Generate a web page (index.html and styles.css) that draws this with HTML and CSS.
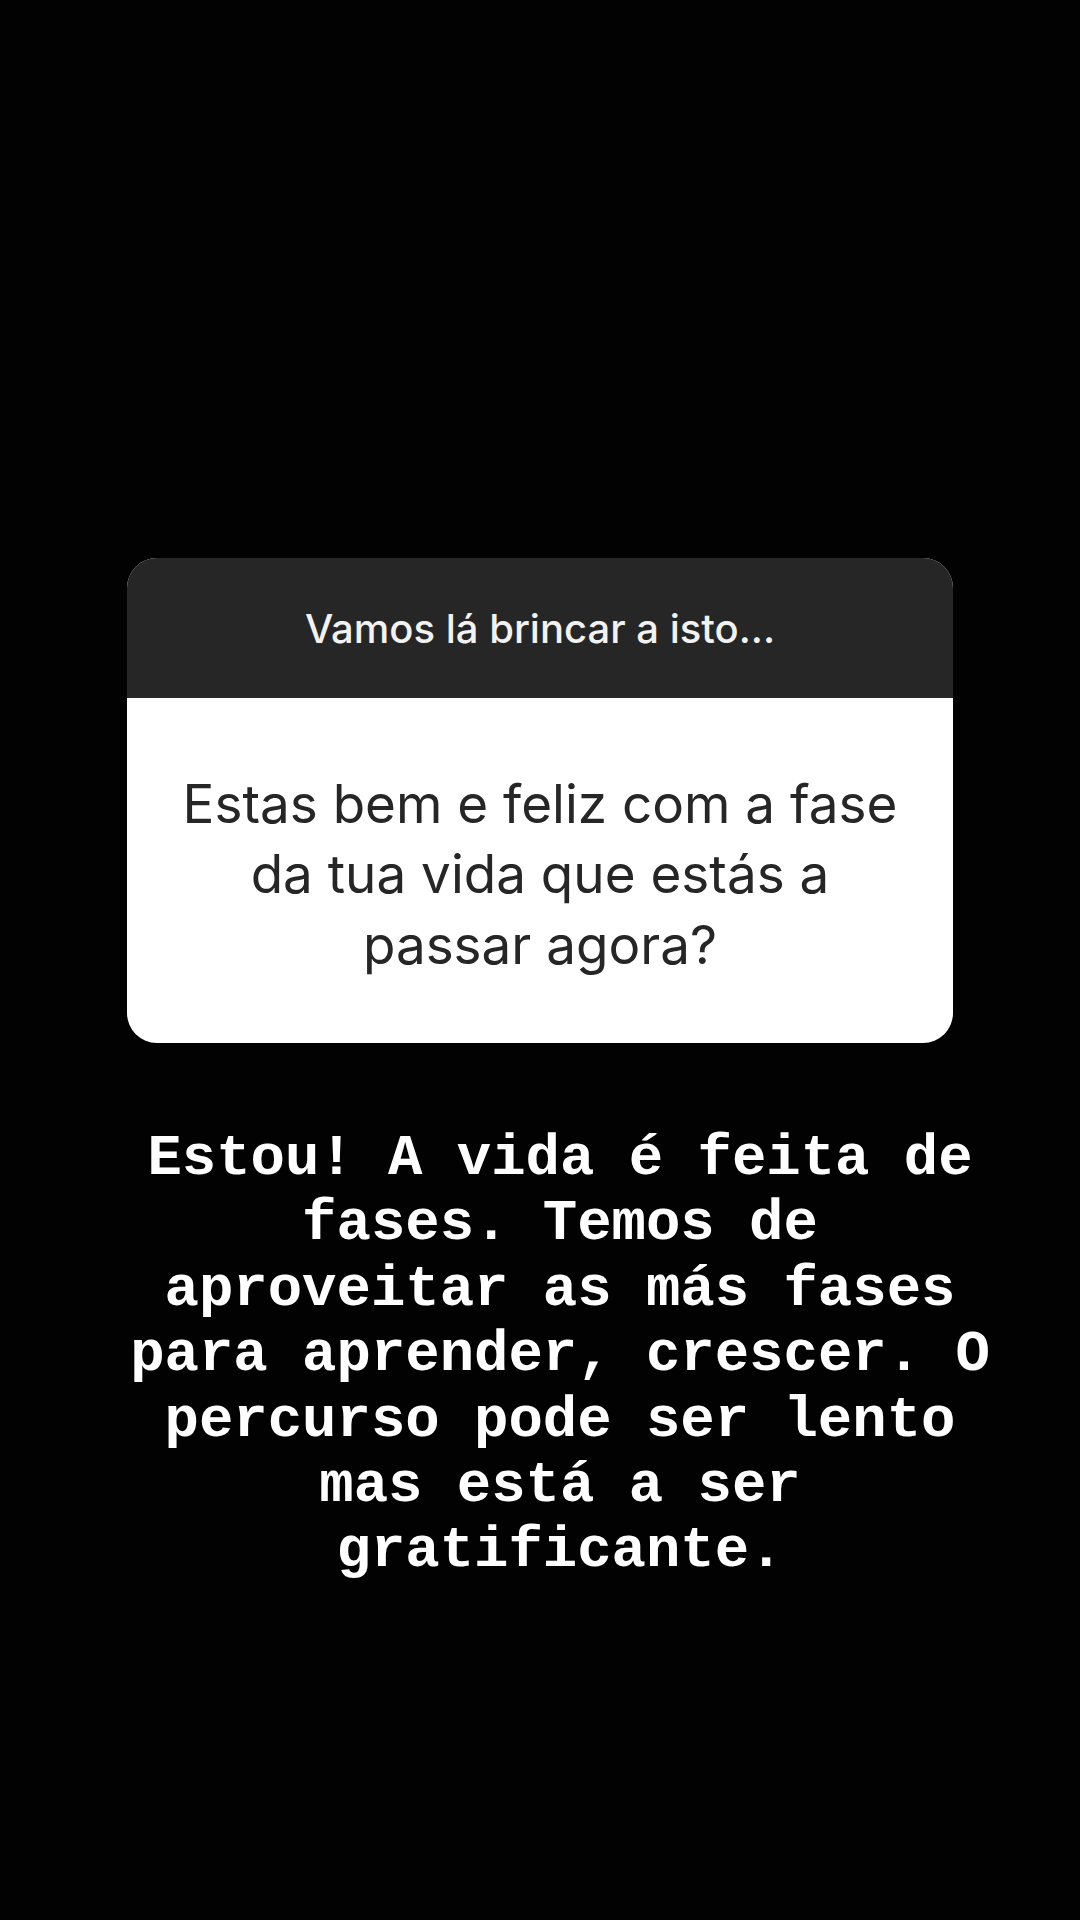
FILE: index.html
```html
<!DOCTYPE html>
<html lang="pt">
<head>
<meta charset="utf-8">
<link rel="stylesheet" href="styles.css">
</head>
<body>
<main class="story">
  <section class="question-card">
    <header class="card-header">Vamos lá brincar a isto...</header>
    <div class="card-body">
      <p class="question">Estas bem e feliz com a fase<br>da tua vida que estás a<br>passar agora?</p>
    </div>
  </section>
  <p class="answer">Estou! A vida é feita de<br>fases. Temos de<br>aproveitar as más fases<br>para aprender, crescer. O<br>percurso pode ser lento<br>mas está a ser<br>gratificante.</p>
</main>
</body>
</html>
```

FILE: styles.css
```css
html, body {
  margin: 0;
  padding: 0;
  background: #020202;
}
.story {
  width: 1080px;
  height: 1920px;
  display: flex;
  flex-direction: column;
  align-items: center;
  padding-top: 558px;
  box-sizing: border-box;
}
.question-card {
  width: 826px;
  border-radius: 30px;
  overflow: hidden;
  background: #ffffff;
}
.card-header {
  height: 140px;
  background: #262626;
  color: #f2f2f2;
  font-family: Inter, "Noto Sans", sans-serif;
  font-weight: 500;
  font-size: 40px;
  display: flex;
  align-items: center;
  justify-content: center;
  letter-spacing: 0;
}
.card-body {
  height: 345px;
  display: flex;
  align-items: center;
  justify-content: center;
}
.question {
  margin: 8px 0 0 0;
  font-family: Inter, "Noto Sans", sans-serif;
  font-weight: 400;
  font-size: 53px;
  line-height: 70.5px;
  color: #262626;
  text-align: center;
  letter-spacing: 0;
}
.answer {
  margin: 83px 0 0 40px;
  font-family: "Liberation Mono", "Courier New", monospace;
  font-weight: 700;
  font-size: 57.3px;
  line-height: 65.4px;
  color: #ffffff;
  text-align: center;
  white-space: nowrap;
}
```
